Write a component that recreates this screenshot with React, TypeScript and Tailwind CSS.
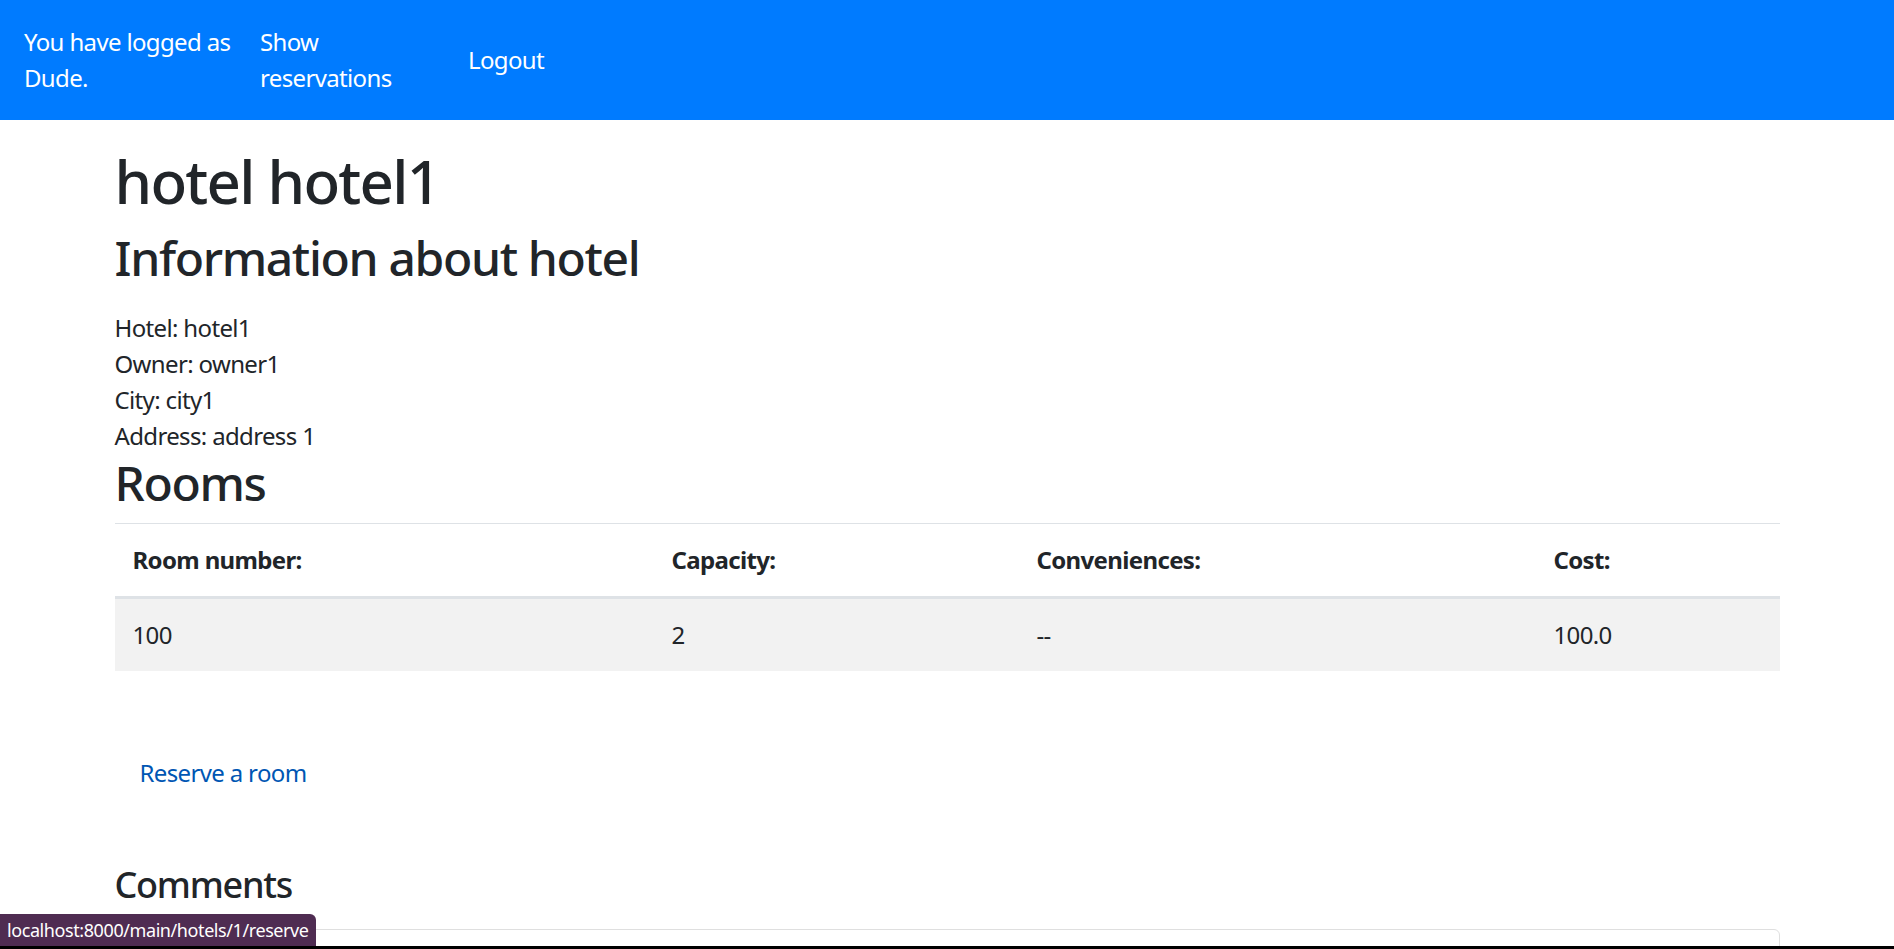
import React from 'react';

const rooms = [
  { number: '100', capacity: '2', conveniences: '--', cost: '100.0' },
];

const info = [
  'Hotel: hotel1',
  'Owner: owner1',
  'City: city1',
  'Address: address 1',
];

const App: React.FC = () => {
  return (
    <div className="min-h-screen bg-white text-[#212529] text-[24px] leading-[36px] tracking-[-0.027em] font-['Segoe_UI','Noto_Sans',sans-serif]">
      <nav className="h-[120px] bg-[#007bff] text-white flex items-center pl-[24px]">
        <div className="w-[236px]">You have logged as Dude.</div>
        <div className="w-[208px]">
          <span className="block w-[150px]">Show reservations</span>
        </div>
        <div>Logout</div>
      </nav>

      <main className="w-[1665px] mx-auto pt-[25px]">
        <h1 className="text-[60px] leading-[72px] font-medium tracking-[-0.029em] mb-[12px]">hotel hotel1</h1>
        <h2 className="text-[48px] leading-[57.6px] font-medium tracking-[-0.028em] mb-[12px]">Information about hotel</h2>

        <div className="mt-[23px]">
          {info.map((line) => (
            <div key={line}>{line}</div>
          ))}
        </div>

        <h2 className="text-[48px] leading-[57.6px] font-medium tracking-[-0.028em] mb-[12px]">Rooms</h2>

        <table className="w-full table-fixed border-collapse">
          <colgroup>
            <col className="w-[539px]" />
            <col className="w-[365px]" />
            <col className="w-[517px]" />
            <col className="w-[244px]" />
          </colgroup>
          <thead>
            <tr className="border-t-[1.5px] border-b-[3px] border-[#dee2e6]">
              <th className="text-left font-bold p-[18px]">Room number:</th>
              <th className="text-left font-bold p-[18px]">Capacity:</th>
              <th className="text-left font-bold p-[18px]">Conveniences:</th>
              <th className="text-left font-bold p-[18px]">Cost:</th>
            </tr>
          </thead>
          <tbody>
            {rooms.map((r) => (
              <tr key={r.number} className="bg-[#f2f2f2]">
                <td className="p-[18px]">{r.number}</td>
                <td className="p-[18px]">{r.capacity}</td>
                <td className="p-[18px]">{r.conveniences}</td>
                <td className="p-[18px]">{r.cost}</td>
              </tr>
            ))}
          </tbody>
        </table>

        <a href="#" className="block w-fit mt-[84px] ml-[25px] text-[#0056b3]">
          Reserve a room
        </a>

        <h4 className="text-[36px] leading-[43.2px] font-medium tracking-[-0.035em] mt-[72px] mb-[12px]">Comments</h4>

        <div className="mt-[23px] h-[160px] border-[1.5px] border-[#dfdfdf] rounded-[6px]" />
      </main>

      {/* browser status bubble + window edge */}
      <div className="fixed left-0 bottom-[3px] h-[32px] px-[7px] flex items-center bg-[#4f2c52] text-white text-[18px] leading-none tracking-[-0.023em] rounded-tr-[6px]">
        localhost:8000/main/hotels/1/reserve
      </div>
      <div className="fixed left-0 bottom-0 w-full h-[3px] bg-black" />
    </div>
  );
};

export default App;
